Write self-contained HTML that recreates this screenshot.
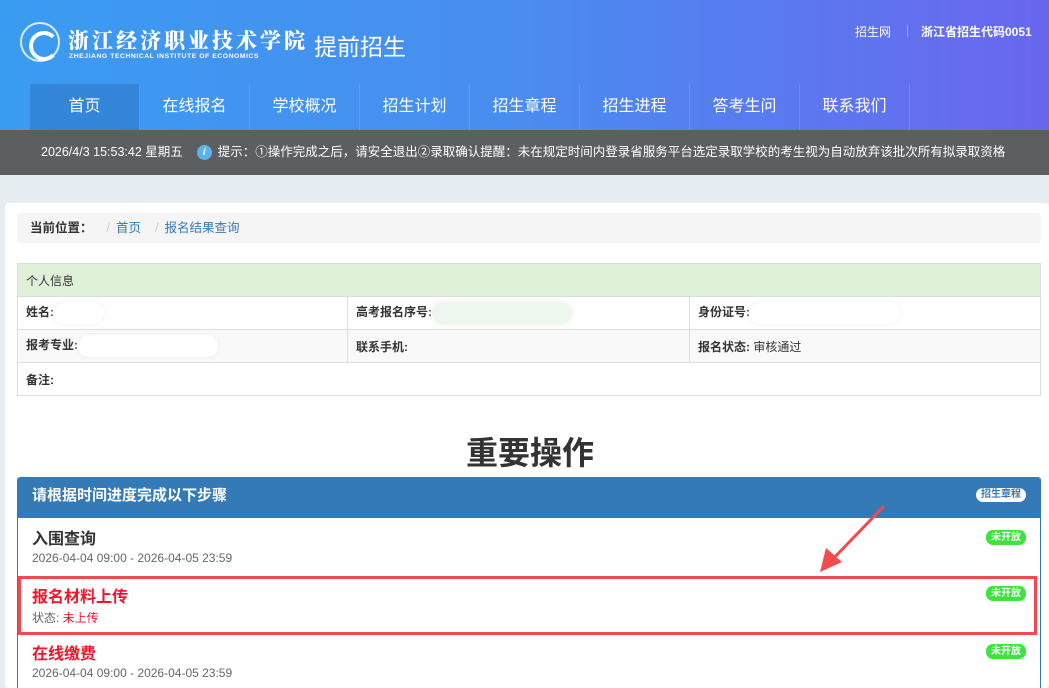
<!DOCTYPE html>
<html><head><meta charset="utf-8"><style>
*{margin:0;padding:0;box-sizing:border-box}
html,body{width:1049px;height:688px;overflow:hidden}
body{font-family:"Liberation Sans","Noto Sans CJK SC",sans-serif;background:#e6edf1;position:relative;font-size:13px;color:#333}
.top{position:absolute;left:0;top:0;width:1049px;height:130px;background:linear-gradient(90deg,#3a9cf1 0%,#4a8cf0 50%,#6a66ef 100%)}
.logo{position:absolute;left:20px;top:22px;width:40px;height:40px;border:2px solid rgba(255,255,255,.8);border-radius:50%}
.logo:after{content:"";position:absolute;left:7px;top:7px;width:22px;height:22px;border:4px solid #fff;border-radius:50%;border-right-color:transparent}
.cn{position:absolute;left:68px;top:25px;color:#fff;font-family:"Noto Serif CJK SC",serif;font-weight:900;font-size:21px;letter-spacing:3px;white-space:nowrap}
.en{position:absolute;left:69px;top:53px;color:#fff;font-size:6.8px;font-weight:bold;letter-spacing:.55px;white-space:nowrap}
.tq{position:absolute;left:314px;top:28px;color:#fff;font-size:23px}
.tr{position:absolute;top:23px;color:#fff;font-size:12px;font-weight:bold}
.nav{position:absolute;top:84px;left:0;height:46px;width:1049px;display:flex;padding-left:30px}
.nav div{width:110px;text-align:center;color:#fff;font-size:16px;line-height:46px;border-right:1px solid rgba(120,160,240,.6)}
.nav div:first-child{background:rgba(40,110,190,.45)}
.bar{position:absolute;top:130px;left:0;width:1049px;height:45px;background:#5c5f60;color:#fff;font-size:12.5px;line-height:45px;padding-left:41px;white-space:nowrap}
.ic{display:inline-block;width:15px;height:15px;border-radius:50%;background:#5bb4ec;color:#fff;font-size:10px;line-height:15px;text-align:center;font-style:italic;font-weight:bold;vertical-align:1px;margin:0 6px 0 14px}
.panel{position:absolute;left:5px;top:203px;width:1044px;height:485px;background:#fff;border-radius:4px}
.bc{position:absolute;left:17px;top:213px;width:1024px;height:30px;background:#f5f5f5;border-radius:3px;line-height:30px;padding-left:13px;font-size:12.5px}
.bc b{color:#333}.bc span{color:#ccc;margin:0 6px 0 14px}.bc a{color:#337ab7}
table{position:absolute;left:17px;top:263px;width:1024px;border-collapse:collapse;font-size:12px}
td{border:1px solid #ddd;height:33px;padding:0 8px;font-weight:bold}
td i{font-style:normal;font-weight:normal}
.h{background:#dff0d8;font-weight:normal}
.blur{display:inline-block;height:22px;background:#fff;border-radius:12px;vertical-align:middle;box-shadow:0 0 6px #eee}
.title{position:absolute;top:428px;left:0;width:1060px;text-align:center;font-size:32px;font-weight:bold;color:#333}
.box{position:absolute;left:17px;top:477px;width:1024px;height:211px;border:1px solid #337ab7;border-bottom:none;border-radius:3px 3px 0 0;overflow:hidden;background:#fff}
.bh{height:40px;background:#337ab7;color:#fff;font-size:15px;font-weight:bold;line-height:36px;padding-left:14px}
.pill{position:absolute;right:14px;background:#fff;color:#337ab7;border-radius:8px;font-size:10px;font-weight:bold;padding:1px 5px;line-height:12px}
.g{position:absolute;right:14px;background:#3fe240;color:#fff;border-radius:7px;font-size:10px;font-weight:bold;padding:2px 5px;line-height:11px}
.it{position:absolute;left:14px;font-size:16px;font-weight:bold}
.sm{position:absolute;left:14px;font-size:12px;color:#666}
.red{position:absolute;left:18px;top:576px;width:1019px;height:59px;border:3px solid #f24a4e}
</style></head><body>
<div class="top">
<div class="logo"></div>
<div class="cn">浙江经济职业技术学院</div>
<div class="en">ZHEJIANG TECHNICAL INSTITUTE OF ECONOMICS</div>
<div class="tq">提前招生</div>
<div class="tr" style="left:855px;font-weight:normal">招生网</div>
<div class="tr" style="left:906px;color:rgba(255,255,255,.4);font-weight:normal">|</div>
<div class="tr" style="left:921px">浙江省招生代码0051</div>
<div class="nav"><div>首页</div><div>在线报名</div><div>学校概况</div><div>招生计划</div><div>招生章程</div><div>招生进程</div><div>答考生问</div><div>联系我们</div></div>
</div>
<div class="bar">2026/4/3 15:53:42 星期五<span class="ic">i</span>提示：①操作完成之后，请安全退出②录取确认提醒：未在规定时间内登录省服务平台选定录取学校的考生视为自动放弃该批次所有拟录取资格</div>
<div class="panel"></div>
<div class="bc"><b>当前位置：</b><span>/</span><a>首页</a><span>/</span><a>报名结果查询</a></div>
<table>
<tr><td colspan="3" class="h">个人信息</td></tr>
<tr><td style="width:330px">姓名:<span class="blur" style="width:50px"></span></td><td style="width:342px">高考报名序号:<span class="blur" style="width:140px;background:#eef7ee"></span></td><td>身份证号:<span class="blur" style="width:150px"></span></td></tr>
<tr style="background:#f9f9f9"><td>报考专业:<span class="blur" style="width:140px"></span></td><td>联系手机:</td><td>报名状态: <i>审核通过</i></td></tr>
<tr><td colspan="3">备注:</td></tr>
</table>
<div class="title">重要操作</div>
<div class="box">
<div class="bh">请根据时间进度完成以下步骤<span class="pill" style="top:10px">招生章程</span></div>
<span class="g" style="top:52px">未开放</span>
<div class="it" style="top:47px;color:#333">入围查询</div>
<div class="sm" style="top:73px">2026-04-04 09:00 - 2026-04-05 23:59</div>
<span class="g" style="top:108px">未开放</span>
<div class="it" style="top:105px;color:#f0152b">报名材料上传</div>
<div class="sm" style="top:131px">状态: <span style="color:#f0152b">未上传</span></div>
<span class="g" style="top:166px">未开放</span>
<div class="it" style="top:162px;color:#f0152b">在线缴费</div>
<div class="sm" style="top:188px">2026-04-04 09:00 - 2026-04-05 23:59</div>
</div>
<div class="red"></div>
<svg style="position:absolute;left:0;top:0" width="1049" height="688"><line x1="884" y1="506" x2="830" y2="562" stroke="#f24a4e" stroke-width="3"/><polygon points="820,572 826,548 842,562" fill="#f24a4e"/></svg>
</body></html>
